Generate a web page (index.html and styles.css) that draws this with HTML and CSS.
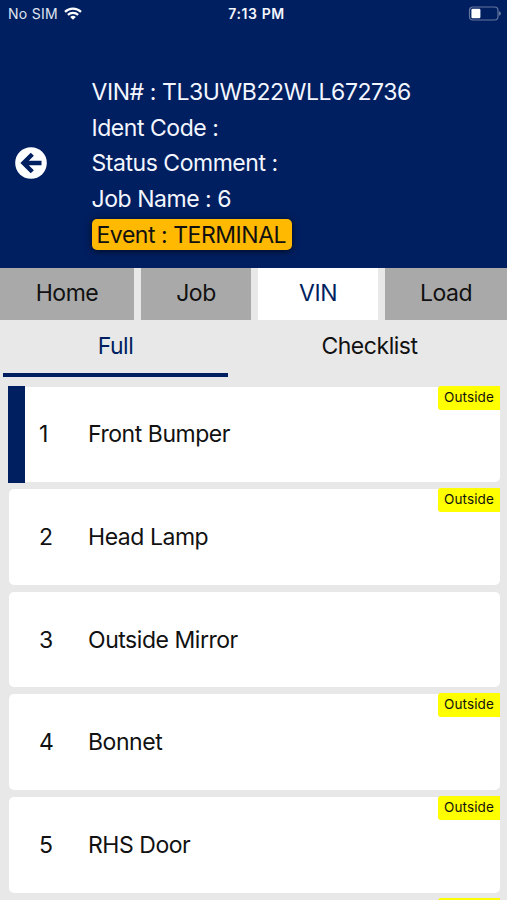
FILE: index.html
```
<!DOCTYPE html>
<html lang="en">
<head>
  <meta charset="UTF-8"/>
  <meta name="viewport" content="width=device-width, initial-scale=1.0"/>
  <title>VIN Inspection</title>
  <link rel="stylesheet" href="styles.css">
</head>
<body>
  <header class="header">
    <div class="status-bar">
      <div class="carrier">
        <span>No SIM</span>
        <svg class="wifi" viewBox="0 0 18 13" width="18" height="13">
          <g fill="none" stroke="#fff" stroke-width="2.2">
            <path d="M1 4.9a11.3 11.3 0 0 1 16 0"/>
            <path d="M3.9 7.9a7.2 7.2 0 0 1 10.2 0"/>
          </g>
          <path d="M9 12.8L6.2 10a4 4 0 0 1 5.6 0z" fill="#fff"/>
        </svg>
      </div>
      <span class="time">7:13 PM</span>
      <svg class="battery" viewBox="0 0 33 15" width="33" height="15">
        <rect x="1.5" y="1" width="28.5" height="13" rx="3.5" fill="none" stroke="#66779f" stroke-width="1.2"/>
        <rect x="3.4" y="2.8" width="9" height="9.4" rx="1.2" fill="#fff"/>
        <path d="M31.2 5.2q1.5.6 1.5 2.3t-1.5 2.3z" fill="#8290b0"/>
      </svg>
    </div>

    <div class="vehicle">
      <button class="back" aria-label="Back">
        <svg viewBox="0 0 32 32" width="32" height="32">
          <circle cx="16" cy="16" r="15.8" fill="#fff"/>
          <path d="M17.3 7.2L8.5 16l8.8 8.8M9 16h17.5" fill="none" stroke="#001f60" stroke-width="4.4"/>
        </svg>
      </button>
      <div class="details">
        <p class="vin">VIN# : TL3UWB22WLL672736</p>
        <p>Ident Code :</p>
        <p>Status Comment :</p>
        <p>Job Name : 6</p>
        <p class="event">Event : TERMINAL</p>
      </div>
    </div>
  </header>

  <nav class="tabs">
    <a class="tab">Home</a>
    <a class="tab">Job</a>
    <a class="tab active">VIN</a>
    <a class="tab">Load</a>
  </nav>

  <nav class="subtabs">
    <a class="subtab active">Full</a>
    <a class="subtab">Checklist</a>
  </nav>

  <main class="list">
    <div class="card selected">
      <span class="number">1</span>
      <span class="name">Front Bumper</span>
      <span class="badge">Outside</span>
    </div>
    <div class="card">
      <span class="number">2</span>
      <span class="name">Head Lamp</span>
      <span class="badge">Outside</span>
    </div>
    <div class="card">
      <span class="number">3</span>
      <span class="name">Outside Mirror</span>
    </div>
    <div class="card">
      <span class="number">4</span>
      <span class="name">Bonnet</span>
      <span class="badge">Outside</span>
    </div>
    <div class="card">
      <span class="number">5</span>
      <span class="name">RHS Door</span>
      <span class="badge">Outside</span>
    </div>
    <div class="card">
      <span class="badge"></span>
    </div>
  </main>
</body>
</html>
```

FILE: styles.css
```
:root {
  --navy: #001f60;
  --page: #e8e8e8;
  --tab: #a9a9a9;
  --event: #ffb900;
  --badge: #ffff00;
  --text: #111;
}

* {
  box-sizing: border-box;
}

body {
  margin: 0;
  height: 900px;
  overflow: hidden;
  display: flex;
  flex-direction: column;
  font-family: Inter, sans-serif;
  font-size: 23px;
  letter-spacing: -0.46px;
  background-color: var(--page);
  color: var(--text);
}

.header {
  flex: none;
  height: 268px;
  background-color: var(--navy);
  color: #f4f6ff;
}

.status-bar {
  display: grid;
  grid-template-columns: 1fr auto 1fr;
  align-items: center;
  height: 27px;
  padding: 0 6px 0 8px;
  font-size: 14px;
}

.carrier {
  display: flex;
  align-items: center;
  gap: 6px;
  letter-spacing: 0.3px;
  color: #dfe4f0;
}

.time {
  padding-left: 4px;
  font-weight: 600;
  letter-spacing: 0.6px;
}

.battery {
  justify-self: end;
}

.vehicle {
  display: flex;
  align-items: center;
  padding: 48px 0 0 15px;
}

.back {
  width: 32px;
  height: 32px;
  margin-right: 44.5px;
  padding: 0;
  border: none;
  background: none;
}

.back svg {
  display: block;
}

.details p {
  margin: 0;
  line-height: 35.5px;
  white-space: nowrap;
}

.details .vin {
  letter-spacing: -0.42px;
}

.details .event {
  width: 200px;
  height: 31px;
  margin-top: 2px;
  padding-left: 5px;
  line-height: 33px;
  border-radius: 5px;
  background-color: var(--event);
  color: var(--text);
  box-shadow: 0 1px 7px rgba(0, 0, 0, 0.7);
}

.tabs {
  flex: none;
  display: grid;
  grid-template-columns: 134px 110px 120px 1fr;
  gap: 7px;
  height: 52px;
}

.tab {
  line-height: 50px;
  text-align: center;
  background-color: var(--tab);
}

.tab.active {
  background-color: #fff;
  color: var(--navy);
}

.subtabs {
  flex: none;
  display: grid;
  grid-template-columns: 1fr 1fr;
  column-gap: 29px;
  height: 56px;
  padding: 0 25px 0 3px;
}

.subtab {
  line-height: 53px;
  text-align: center;
}

.subtab.active {
  border-bottom: 4px solid var(--navy);
  color: var(--navy);
}

.list {
  flex: 1;
  min-height: 0;
  overflow: hidden;
  display: flex;
  flex-direction: column;
  gap: 7px;
  padding: 10.7px 7px 0 9px;
}

.card {
  position: relative;
  flex: none;
  display: flex;
  align-items: center;
  height: 95.6px;
  padding-left: 30px;
  border-radius: 5px;
  background-color: #fff;
}

.card.selected::before {
  content: "";
  position: absolute;
  top: -1px;
  bottom: -1px;
  left: -1px;
  width: 17px;
  background-color: var(--navy);
}

.number {
  width: 49px;
}

.badge {
  position: absolute;
  top: -1.2px;
  right: 0;
  width: 62px;
  height: 24px;
  border-radius: 3px 0 0 3px;
  font-size: 13.5px;
  letter-spacing: 0.1px;
  line-height: 23px;
  text-align: center;
  background-color: var(--badge);
}
```
